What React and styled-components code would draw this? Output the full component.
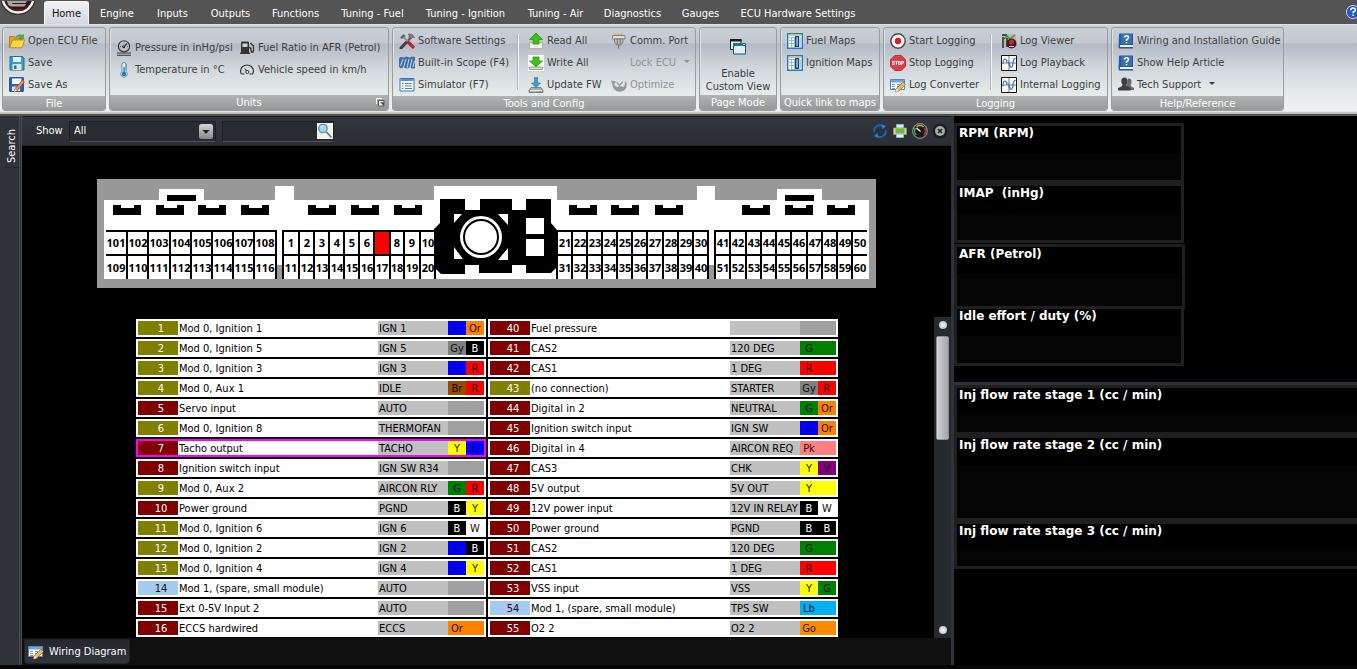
import React from 'react';
import styled, { createGlobalStyle, css } from 'styled-components';

const GlobalStyle = createGlobalStyle`
	* {
		box-sizing: border-box;
	}

	body {
		margin: 0;
		background: #000;
	}

	body, button, input, select {
		font-family: 'DejaVu Sans Condensed', 'Noto Sans', sans-serif;
		font-size: 11px;
		line-height: 14px;
	}

	button {
		margin: 0;
		padding: 0;
		border: 0;
		background: none;
		color: inherit;
	}
`;

const Page = styled.div`
	display: flex;
	flex-direction: column;
	height: 100vh;
	overflow: hidden;
	padding-bottom: 4px;
	background: #050505;
`;

/* ---------- tabs ---------- */

const TopBar = styled.header`
	display: flex;
	flex: none;
	align-items: flex-end;
	justify-content: space-between;
	height: 24px;
	overflow: hidden;
	background: #545454;
`;

const Orb = styled.button`
	align-self: flex-start;
	width: 44px;
	height: 16px;

	svg {
		display: block;
	}
`;

const Tabs = styled.nav`
	display: flex;
	flex: 1;
`;

const Tab = styled.button`
	flex: none;
	height: 23px;
	width: ${props => props.$width}px;
	padding: 2px 0 0;
	border-radius: 3px 3px 0 0;
	color: #fff;
	white-space: nowrap;

	${props => props.$active && css`
		border: 1px solid #f4f5f7;
		border-bottom: 0;
		background: linear-gradient(#f1f3f5, #d3d7dd);
		color: #111;
	`}
`;

const HelpButton = styled.button`
	align-self: center;
	width: 12px;
	height: 16px;
`;

/* ---------- ribbon ---------- */

const Ribbon = styled.div`
	display: flex;
	flex: none;
	gap: 3px;
	height: 92px;
	padding: 2px 2px 3px;
	border-top: 1px solid #dfe2e6;
	border-bottom: 2px solid #545454;
	background: linear-gradient(#cdd1d8, #c3c8d1 18px, #b4bac5 19px, #cfd4d9 40px, #e4eae9 66px, #f0f2f2 86px, #bcbcbc 88px);
`;

const GroupBox = styled.section`
	display: flex;
	flex-direction: column;
	flex: none;
	width: ${props => props.$width}px;
	border: 1px solid #9a9da0;
	border-radius: 3px;
	box-shadow: inset 1px 0 #dde0e4;
	overflow: hidden;
`;

const GroupBody = styled.div`
	display: flex;
	flex: 1;
	padding: ${props => (props.$low ? 9 : 2)}px 0 0 6px;
`;

const GroupTitle = styled.h2`
	display: flex;
	align-items: center;
	justify-content: center;
	position: relative;
	height: 15px;
	margin: 0;
	padding-top: 1px;
	background: linear-gradient(#b0b3b3, #969898);
	color: #fff;
	font-weight: normal;
	font-size: 11px;
`;

const Launcher = styled.button`
	position: absolute;
	right: 3px;
	top: 3px;
	height: 9px;

	svg {
		display: block;
	}
`;

const Column = styled.div`
	flex: none;
	width: ${props => props.$width}px;
`;

const Divider = styled.span`
	width: 1px;
	height: 56px;
	margin: 4px 9px 0 0;
	background: #f4f4f6;
	box-shadow: -1px 0 #b2b6bc;
`;

const Tool = styled.button`
	display: flex;
	align-items: center;
	gap: 3px;
	height: 22px;
	color: ${props => (props.disabled ? '#8f9296' : '#3b3d41')};
	white-space: nowrap;
`;

const IconSlot = styled.span`
	display: flex;
	flex: none;
	width: 16px;
	height: 16px;
`;

const BigTool = styled.button`
	display: flex;
	flex-direction: column;
	align-items: center;
	justify-content: flex-end;
	gap: 12px;
	width: 100%;
	padding: 0 6px 2px 0;
	line-height: 13px;
	color: #3b3d41;
	white-space: nowrap;
`;

/* ---------- workspace ---------- */

const Workspace = styled.div`
	display: flex;
	flex: 1;
	min-height: 0;
`;

const SideRail = styled.aside`
	flex: none;
	width: 22px;
	border-right: 3px double #4a4c50;
	background: #2f3238;
`;

const RailTab = styled.button`
	display: flex;
	align-items: center;
	justify-content: center;
	width: 14px;
	height: 52px;
	margin-left: 5px;
	padding-bottom: 10px;
	border-top: 1px solid #24262a;
	color: #fff;
	writing-mode: vertical-rl;
	transform: rotate(180deg);
`;

const MainPane = styled.main`
	display: flex;
	flex: 1;
	flex-direction: column;
	min-width: 0;
	background: #000;
`;

const Toolbar = styled.div`
	display: flex;
	flex: none;
	align-items: center;
	height: 30px;
	padding: 0 3px 0 14px;
	border-top: 1px solid #1b1d21;
	border-bottom: 1px solid #1f2125;
	background: linear-gradient(#32353c, #2b2e35);
	color: #fff;
`;

const ShowLabel = styled.label`
	width: 33px;
`;

const fieldBox = css`
	display: flex;
	align-items: center;
	height: 21px;
	border: 1px solid #1c1e22;
	border-bottom-color: #4e5157;
	background: #282b31;
`;

const SelectBox = styled.div`
	${fieldBox}
	position: relative;
	width: 147px;

	select {
		width: 100%;
		height: 18px;
		padding: 0 0 0 4px;
		border: 0;
		background: transparent;
		color: #fff;
		appearance: none;
	}

	svg {
		position: absolute;
		right: 1px;
		top: 1px;
		pointer-events: none;
	}
`;

const SearchBox = styled.form`
	${fieldBox}
	width: 112px;
	margin-left: 6px;

	input {
		flex: 1;
		min-width: 0;
		padding: 0 4px;
		border: 0;
		outline: 0;
		background: transparent;
		color: #fff;
	}

	button {
		width: 16px;
		height: 16px;
	}

	svg {
		display: block;
	}
`;

const ToolbarActions = styled.div`
	display: flex;
	gap: 4px;
	margin-left: auto;

	button {
		width: 16px;
		height: 16px;
	}

	svg {
		display: block;
	}
`;

const ConnectorArea = styled.div`
	display: flex;
	flex: none;
	justify-content: center;
	height: 171px;
	padding-top: 33px;

	svg {
		flex: none;
	}

	text {
		font-family: 'Noto Sans', sans-serif;
		font-size: 11px;
		font-weight: bold;
		text-anchor: middle;
	}
`;

const ListArea = styled.div`
	display: flex;
	flex: 1;
	min-height: 0;
	padding-left: 18px;
	overflow: hidden;
`;

const PinTables = styled.div`
	display: flex;
	flex: 1;
	gap: 2px;
	align-items: flex-start;
	justify-content: center;
	height: 321px;
`;

const PinTable = styled.table`
	flex: none;
	width: 350px;
	table-layout: fixed;
	border-collapse: separate;
	border-spacing: 0 2px;
`;

const PinRow = styled.tr`
	background: #fff;

	th, td {
		height: 18px;
		padding: 2px 0 0;
		border: 0 solid ${props => (props.$selected ? '#f0f' : '#fff')};
		border-width: 2px 0;
		font-weight: normal;
		line-height: 12px;
		white-space: nowrap;
	}

	th {
		border-left-width: 2px;
	}

	td:last-child {
		border-right-width: 2px;
	}
`;

const kinds = {
	mod: '#808000',
	ecu: '#800000',
	spare: '#a6caf0',
};

const PinNumber = styled.th`
	width: 42px;
	background: ${props => kinds[props.$kind]};
	color: ${props => (props.$kind === 'spare' ? '#111' : '#fff')};
	text-indent: 6px;
`;

const PinName = styled.td`
	width: 200px;
	text-indent: 1px;
`;

const PinLabel = styled.td`
	width: 70px;
	background: #c0c0c0;
	text-indent: 1px;
`;

const Swatch = styled.td`
	width: ${props => (props.$last ? 20 : 18)}px;
	background: ${props => props.$fill};
	color: ${props => props.$ink};
	text-align: center;
`;

const ScrollBar = styled.div`
	display: flex;
	flex: none;
	flex-direction: column;
	align-items: center;
	width: 17px;
	padding: 4px 0;
	background: #26292e;
`;

const ScrollDot = styled.button`
	flex: none;
	width: 8px;
	height: 8px;
	border-radius: 50%;
	background: radial-gradient(#fff, #a5a7aa);
`;

const ScrollTrack = styled.div`
	flex: 1;
	width: 13px;
	padding-top: 7px;
`;

const ScrollThumb = styled.div`
	height: 104px;
	border: 1px solid #8e9094;
	border-radius: 2px;
	background: linear-gradient(90deg, #cfd1d5, #a4a6aa);
`;

const PageTabs = styled.footer`
	flex: none;
	height: 27px;
	padding: 1px 2px;
	background: #101010;
`;

const PageTab = styled.button`
	display: flex;
	align-items: center;
	gap: 5px;
	height: 25px;
	width: 106px;
	padding-left: 3px;
	border: 1px solid #202226;
	border-radius: 0 0 4px 4px;
	background: linear-gradient(#24272c, #32353b);
	color: #fff;
	white-space: nowrap;
`;

const Splitter = styled.div`
	flex: none;
	width: 3px;
	background: #2f3238;
`;

const Readouts = styled.section`
	flex: none;
	width: 30%;
	max-width: 403px;
	background: #000;
`;

const ReadoutStack = styled.div`
	height: ${props => (props.$top ? '269px' : 'auto')};
	padding-top: ${props => (props.$top ? 7 : 0)}px;
	border-bottom: ${props => (props.$top ? '3px solid #2f3238' : 0)};
`;

const Gauge = styled.div`
	width: ${props => props.$width};
	height: ${props => props.$height}px;
	margin-top: ${props => props.$gap || 0}px;
	padding: 0 2px;
	border: 3px solid #1f1f1f;
	border-right-width: ${props => (props.$width === '100%' ? 0 : 3)}px;
	background: linear-gradient(#000 27px, #040404 27px);
	color: #fff;
	font-family: 'DejaVu Sans', sans-serif;
	font-size: 12px;
	font-weight: bold;
	line-height: 14px;
	white-space: pre;
`;

/* ---------- icons ---------- */

const notepad = (
	<>
		<path d="M.5 2.5h14v10H.5z" fill="#f7fbff" stroke="#5a86bb" />
		<path d="M1 3h13v2.500H1z" fill="#6fa4dd" />
		<path d="M2 7h3v1H2zM2 9h3v1H2zM2 11h3v1H2zM7 7h4v1H7zM7 9h2v1H7z" fill="#7f9fc6" />
		<path d="M5.500 15l1-3.500 6.500-6.500 2.500 2.500L9 14z" fill="#f2b850" stroke="#9c6a22" strokeWidth=".7" />
		<path d="M5.500 15l1-3.500L9 14z" fill="#f9e3c0" />
	</>
);

const wave = (
	<>
		<path d="M.5.5h15v15H.5z" fill="#fff" stroke="#111" />
		<path d="M8 1v14M1 8h14" stroke="#444" strokeWidth=".7" />
		<path d="M2 9.500c0-7 3.500-7 4-1.500" fill="none" stroke="#2e79bd" strokeWidth="1.100" />
		<path d="M8 8c.5 6 3.500 5.500 4 0q.3-4 2.500-5" fill="none" stroke="#2e79bd" strokeWidth="1.300" />
		<path d="M6.500 5l3 6" fill="none" stroke="#5b5b8c" strokeWidth=".7" />
	</>
);

const helpBook = (
	<>
		<path d="M1 1.500Q1 .5 2 .5h13v15H2Q.5 15.500.5 14z" fill="#2457a0" />
		<path d="M2 12h13v2H2z" fill="#eef3fa" />
		<path d="M3 1h11v10H3z" fill="#366fb8" />
		<path d="M6.500 4.500Q6.500 2.800 8.500 2.800T10.500 4.500Q10.500 5.700 8.500 6.500V8M8.500 9v1.300" fill="none" stroke="#fff" strokeWidth="1.600" />
	</>
);

const mapSheet = (
	<>
		<path d="M.7.7h14.600v14.600H.7z" fill="#fff" stroke="#1a7fc0" strokeWidth="1.400" />
		<path d="M2 1.500h12v1.500H2z" fill="#f0c36a" />
		<path d="M2 4.500h5M2 7.500h5M2 10.500h5M4.500 4v10M7.500 4v10" stroke="#84b7dc" strokeWidth=".9" />
		<path d="M8.600 3.600h3v9.800h-3z" fill="#7db6df" stroke="#20436e" strokeWidth="1.200" />
		<path d="M13.200 4.500v9" stroke="#9cb6cb" />
	</>
);

const icons = {
	open: (
		<>
			<path d="M.5 14.500V3.500h5l1 1.500h6v9.500z" fill="#e2a325" stroke="#a6741a" strokeWidth=".8" />
			<path d="M.7 14.800L3.500 7h12.300l-3 7.800z" fill="#ffd54a" stroke="#b5821d" strokeWidth=".8" />
			<path d="M7 4.500C8 1.500 11 1 13 2.500l1.300-1.300.5 4.600h-4.500l1.200-1.500C10 3 8.500 3 7 4.500z" fill="#4cb24a" stroke="#2c8433" strokeWidth=".5" />
		</>
	),
	save: (
		<>
			<path d="M1 1.500h12.500L15 3v12H1z" fill="#3d9cc4" stroke="#27738f" />
			<path d="M4 2h8v5H4z" fill="#e8f5fb" />
			<path d="M3.500 9h9v6h-9z" fill="#d2e6ef" />
			<path d="M5 10.500h2.500V14H5z" fill="#2c7594" />
		</>
	),
	saveAs: (
		<>
			<path d="M.7.7h13.600v13.600H.7z" fill="#2d62c4" stroke="#1c3f8a" />
			<path d="M3 1.500h9.500V7H3z" fill="#fff" />
			<path d="M3 9.500h8V14H3z" fill="#dbe6f5" />
			<path d="M5 15l1-3.500L13.500 3l2 1.800L8.500 13.500z" fill="#e88d3c" stroke="#7a4a1e" strokeWidth=".6" />
			<path d="M5 15l1-3 2 1.500z" fill="#fbe6c8" />
		</>
	),
	pressure: (
		<g fill="none" stroke="#333" strokeWidth="1.100">
			<circle cx="8" cy="6.300" r="5.600" />
			<path d="M8.500 6l2.500-2.500M1 13h14M1 15.200h14" />
			<circle cx="7.700" cy="6.800" r="1" />
			<path d="M8 2v1M4 6.500h1M11 6.500h1" strokeWidth=".7" />
		</g>
	),
	thermometer: (
		<>
			<path d="M6 2.500a2 2 0 014 0V9.500a3.200 3.200 0 11-4 0z" fill="#e3f2fa" stroke="#4d83a8" strokeWidth=".9" />
			<path d="M7.400 5h1.400v6H7.400z" fill="#2b86c9" />
			<circle cx="8" cy="12" r="2.200" fill="#1d79c0" />
			<path d="M9 3h2M9 5h2M9 7h2" stroke="#5b7f96" strokeWidth=".7" />
		</>
	),
	pump: (
		<>
			<path d="M2 2.500Q2 1.500 3 1.500h6q1 0 1 1V13H2zM1 12.500h10V14H1z" fill="#333" />
			<path d="M3.500 3.500h5V7h-5z" fill="#cdd2d8" />
			<path d="M10 7.500q2 0 2 2.500c0 3 2.500 3 2.500 0V6L11.500 3" fill="none" stroke="#333" strokeWidth="1.300" />
		</>
	),
	speed: (
		<>
			<path d="M2.500 12A6.500 6.500 0 0 1 1.500 9a6.500 6 0 0 1 13 0Q14.500 10.500 13.500 12h-3M2.500 12h3" fill="none" stroke="#333" strokeWidth="1.200" />
			<path d="M5 6L9.300 9 8 11z" fill="#333" />
			<circle cx="8.300" cy="10" r="1.500" fill="#dfe3e6" stroke="#333" />
		</>
	),
	tools: (
		<>
			<path d="M2 15L13.500 3" stroke="#555" strokeWidth="2" />
			<path d="M2 15l5-5.300" stroke="#3d4046" strokeWidth="3" strokeLinecap="round" />
			<path d="M4 3.500l5 5" stroke="#8d9095" strokeWidth="1.800" />
			<path d="M9.500 9.500l4.500 4.500" stroke="#b5262b" strokeWidth="3.200" strokeLinecap="round" />
			<path d="M1 4.500L4.500 1l2 2L3 6z" fill="#62656b" />
			<path d="M9 1.500Q13-.5 15.500 4.500l-2-.5-2 2L9.500 4 11 3z" fill="#7c7f85" stroke="#4c4e52" strokeWidth=".6" />
		</>
	),
	scope: (
		<>
			<path d="M0 4q1-3 3-2t3 0 3 0 3 0 4 0v11q-2 1-4 0t-3 0-3 0-3 0-3-1z" fill="#3f6ea8" />
			<path d="M1.500 11L4 4M4.500 13l2.500-9M8 13l2-9M11 13l2-9M14 12l1.500-6" fill="none" stroke="#c5d6e8" strokeWidth="1" />
		</>
	),
	simulator: (
		<>
			<path d="M1 1.500h14v12.500H1z" fill="#fff" stroke="#3f74b8" />
			<path d="M1.500 2h13v2h-13z" fill="#5b93d3" />
			<path d="M3 6h1.500v1H3zM3 8.500h1.500v1H3zM3 11h1.500v1H3zM6 6h7v1H6zM6 8.500h7v1H6zM6 11h7v1H6z" fill="#5380b8" />
		</>
	),
	read: (
		<>
			<path d="M1.500 9.500h13v6h-13z" fill="#f2f2f2" stroke="#b3b3a8" />
			<path d="M8 0l6.500 6.500h-3.500V11H5V6.500H1.500z" fill="#3cc313" stroke="#278a0a" strokeWidth=".7" />
		</>
	),
	write: (
		<>
			<path d="M0 0h16v16H0z" fill="#fff" />
			<path d="M1.500 12h13v2.500h-13z" fill="#d8d8cf" stroke="#8f8f86" strokeWidth=".8" />
			<path d="M8 12L1.500 6H5V2h6v4h3.500z" fill="#3cc313" stroke="#278a0a" strokeWidth=".7" />
		</>
	),
	update: (
		<>
			<path d="M3 10.500h10l2 3v2H1v-2z" fill="#a8adaf" stroke="#6c7072" strokeWidth=".8" />
			<path d="M2 13.500h12" stroke="#e9ecec" />
			<path d="M10.500 14h2v1h-2z" fill="#4dbb3f" />
			<path d="M8 10.500L3.500 6H6q1-2 .5-5.500h3Q9 4 10 6h2.500z" fill="#3f9bd4" stroke="#256e9d" strokeWidth=".6" />
		</>
	),
	port: (
		<>
			<path d="M4.500.500v2.500M7.500.500v2.500M10.500.500v2.500" stroke="#e5a24a" strokeWidth="1.700" />
			<path d="M1.500 2.500h12.500V6h-12.500z" fill="#dcdddf" stroke="#808285" />
			<path d="M3.500 6h8.500v3l-2.500 3H6L3.500 9z" fill="#c2c4c7" stroke="#77797c" />
			<path d="M7.700 12v3.500M6.300 6v5.500M9.200 6v5.500" stroke="#66686b" />
		</>
	),
	none: null,
	optimize: (
		<>
			<path d="M3 5Q3 9 6 10l3-1 3 1Q15 8 13.500 4l2 1.500Q17 13 10 14.500q-7 1-8.500-6z" fill="#96999c" />
			<path d="M0 3.500l5 1L2 9zM6 4.500l2.500 3 3-3.500.5 1.500-3.500 4-3-3.500z" fill="#96999c" />
		</>
	),
	windows: (
		<>
			<path d="M.5.500h10.500v10H.5z" fill="#e9edf0" stroke="#1c1c1c" />
			<path d="M0 0h11.500v2.500H0z" fill="#1c1c1c" />
			<path d="M3.500 4.500h12v10.500h-12z" fill="#e7edef" stroke="#14576f" />
			<path d="M3 4h13v3H3z" fill="#0e7897" />
			<path d="M13 5h2v1h-2z" fill="#fff" />
		</>
	),
	map: mapSheet,
	record: (
		<>
			<circle cx="8" cy="8" r="7.200" fill="#fdfdfd" stroke="#4a4a4a" strokeWidth="1.500" />
			<circle cx="8" cy="8" r="3.200" fill="#e01b24" />
		</>
	),
	stop: (
		<>
			<path d="M4.800.5h6.400l4.300 4.300v6.400l-4.300 4.300H4.800L.5 11.200V4.800z" fill="#d8404b" stroke="#b5303a" />
			<path d="M4.500 6.500H2.500V8h2v1.500h-2M5.300 6.500h2.400M6.500 6.500v3M8.600 6.500h1.600v3H8.600zM11.600 10V6.500h1.900V8h-1.900" fill="none" stroke="#fff" strokeWidth=".9" />
		</>
	),
	notepad,
	logView: (
		<>
			<path d="M1 1h14v13H1z" fill="#b9b9ad" />
			<path d="M1 1h5v2H1zM1 4h2v11H1zM5 5h2v9H5z" fill="#4c4f4c" />
			<path d="M3 6l3-3 3 3 5-4" fill="none" stroke="#3b8f3b" strokeWidth="1.300" />
			<circle cx="10.500" cy="10.500" r="5" fill="#3a2020" />
			<circle cx="10.500" cy="9" r="2.600" fill="#c02a2a" />
			<path d="M8 13.500h5" stroke="#e2e2e2" />
		</>
	),
	wave,
	help: helpBook,
	people: (
		<g fill="#3d3f42">
			<path d="M10 1.500q3.500-.5 3.500 3 0 2-1 3.500 0 1.500 3.500 3v2H11L8.500 9z" opacity=".75" />
			<path d="M6.500.500Q9.500.500 9.500 4q0 2.500-1.300 4 0 1.500 4.300 3v2.500H0V11q4.500-1.500 4.500-3Q3.300 6.500 3.300 4 3.300.500 6.500.500z" />
		</g>
	),
	find: (
		<>
			<path d="M0 0h16v16H0z" fill="#f4f2ef" />
			<circle cx="6" cy="5.500" r="4.200" fill="#a9d2f0" stroke="#5c8fbd" strokeWidth="1.300" />
			<path d="M4 4.500q1-2 3-1.500" fill="none" stroke="#fff" />
			<path d="M9.500 9l5 5.500" stroke="#6d6f73" strokeWidth="1.600" />
		</>
	),
	refresh: (
		<>
			<path d="M2.300 9A5.600 5.600 0 0 1 10.500 3M13.700 7.500A5.600 5.600 0 0 1 5.500 13.200" fill="none" stroke="#1468c4" strokeWidth="1.800" />
			<path d="M9.500 1l4.500 2.300-3.500 3zM6.500 15.200L2 12.900l3.500-3z" fill="#1c86e0" />
		</>
	),
	printer: (
		<>
			<path d="M4.500 1.500h7v4h-7z" fill="#d3e9f7" stroke="#8fb4cc" />
			<path d="M1.500 5h13v6.500h-13z" fill="#cfd6ca" stroke="#8a9a78" strokeWidth=".8" />
			<path d="M3.500 5.500h9v5h-9z" fill="#7cb82f" />
			<path d="M4.500 11h7v3.500h-7z" fill="#e6f3fb" stroke="#8fb4cc" />
		</>
	),
	gauge: (
		<>
			<circle cx="8" cy="8" r="7.300" fill="#16181a" stroke="#8a8c8f" strokeWidth="1.200" />
			<path d="M4.200 12A5.500 5.500 0 0 1 3.500 4.800" fill="none" stroke="#31b14a" strokeWidth="1.600" />
			<path d="M4.500 3.800a5.500 5.500 0 0 1 7 0" fill="none" stroke="#b8a62a" strokeWidth="1.600" />
			<path d="M12.300 4.800a5.500 5.500 0 0 1-.5 7.200" fill="none" stroke="#c4332b" strokeWidth="1.600" />
			<path d="M8.500 8.500l-4-3.500" stroke="#f5f5f5" strokeWidth="1.300" />
		</>
	),
	close: (
		<>
			<circle cx="8" cy="8" r="7.500" fill="#1c1d20" />
			<circle cx="8" cy="8" r="5" fill="#aaabad" />
			<path d="M6 6l4 4M10 6l-4 4" stroke="#222" strokeWidth="1.700" />
		</>
	),
	about: (
		<>
			<circle cx="8" cy="8" r="6.600" fill="#2458c8" stroke="#c8d4ec" />
			<path d="M5.800 6.300q0-2.300 2.300-2.300t2.200 2q0 1.300-2.200 2.300v1M8.100 10.500v1.600" fill="none" stroke="#fff" strokeWidth="1.600" />
		</>
	),
	arrow: (
		<>
			<defs>
				<linearGradient id="arrowFace" x2="0" y2="1">
					<stop stopColor="#d4d5d7" />
					<stop offset="1" stopColor="#85878a" />
				</linearGradient>
			</defs>
			<rect x="1" y="1" width="14" height="15" rx="2.500" fill="url(#arrowFace)" />
			<path d="M4.500 7h7L8 11z" fill="#222" />
		</>
	),
};

const Icon = ({ name }) => (
	<svg width="16" height="16" viewBox="0 0 16 16" aria-hidden="true">
		{icons[name]}
	</svg>
);

const OrbLogo = () => (
	<svg width="38" height="15" viewBox="0 0 38 15" aria-hidden="true">
		<circle cx="18" cy="-4" r="18" fill="#3a3132" />
		<circle cx="18" cy="-4" r="15.500" fill="#32181a" stroke="#f0f0f0" strokeWidth="2.500" />
		<path d="M7 0h20l-1.500 2H13q-1 0-1 1h14l-1.500 2.500H11Q8 5 7 0z" fill="#a9a4a4" />
		<path d="M8 6.500q10 3 20 0-8 7-20 0z" fill="#6e1a1d" />
	</svg>
);

/* ---------- ribbon content ---------- */

const tabs = [
	['Home', 45],
	['Engine', 56],
	['Inputs', 55],
	['Outputs', 61],
	['Functions', 69],
	['Tuning - Fuel', 85],
	['Tuning - Ignition', 101],
	['Tuning - Air', 79],
	['Diagnostics', 75],
	['Gauges', 61],
	['ECU Hardware Settings', 134],
];

const ToolButton = ({ icon, children, arrow, disabled }) => (
	<Tool type="button" disabled={disabled}>
		<IconSlot><Icon name={icon} /></IconSlot>
		{children}
		{arrow && (
			<svg width="12" height="8" viewBox="0 0 12 8" aria-hidden="true">
				<path d="M5 1h6L8 4z" fill="currentColor" />
			</svg>
		)}
	</Tool>
);

const Group = ({ title, width, low, launcher, children }) => (
	<GroupBox $width={width}>
		<GroupBody $low={low}>{children}</GroupBody>
		<GroupTitle>
			{title}
			{launcher && (
				<Launcher type="button" aria-label="More units">
					<svg width="9" height="9" viewBox="0 0 9 9">
						<path d="M.5 6V.5H6" fill="none" stroke="#fff" />
						<path d="M2.500 2.500h5.500V8H2.500z" fill="#eee" stroke="#555" />
						<path d="M4 4l4 4V4.500" fill="#444" />
					</svg>
				</Launcher>
			)}
		</GroupTitle>
	</GroupBox>
);

const RibbonBar = () => (
	<Ribbon>
		<Group title="File" width={104}>
			<Column $width={90}>
				<ToolButton icon="open">Open ECU File</ToolButton>
				<ToolButton icon="save">Save</ToolButton>
				<ToolButton icon="saveAs">Save As</ToolButton>
			</Column>
		</Group>
		<Group title="Units" width={280} low launcher>
			<Column $width={123}>
				<ToolButton icon="pressure">Pressure in inHg/psi</ToolButton>
				<ToolButton icon="thermometer">Temperature in °C</ToolButton>
			</Column>
			<Column $width={140}>
				<ToolButton icon="pump">Fuel Ratio in AFR (Petrol)</ToolButton>
				<ToolButton icon="speed">Vehicle speed in km/h</ToolButton>
			</Column>
		</Group>
		<Group title="Tools and Config" width={304}>
			<Column $width={119}>
				<ToolButton icon="tools">Software Settings</ToolButton>
				<ToolButton icon="scope">Built-in Scope (F4)</ToolButton>
				<ToolButton icon="simulator">Simulator (F7)</ToolButton>
			</Column>
			<Divider />
			<Column $width={83}>
				<ToolButton icon="read">Read All</ToolButton>
				<ToolButton icon="write">Write All</ToolButton>
				<ToolButton icon="update">Update FW</ToolButton>
			</Column>
			<Column $width={83}>
				<ToolButton icon="port">Comm. Port</ToolButton>
				<ToolButton icon="none" arrow disabled>Lock ECU</ToolButton>
				<ToolButton icon="optimize" disabled>Optimize</ToolButton>
			</Column>
		</Group>
		<Group title="Page Mode" width={78}>
			<BigTool type="button">
				<Icon name="windows" />
				<span>Enable<br />Custom View</span>
			</BigTool>
		</Group>
		<Group title="Quick link to maps" width={100}>
			<Column $width={90}>
				<ToolButton icon="map">Fuel Maps</ToolButton>
				<ToolButton icon="map">Ignition Maps</ToolButton>
			</Column>
		</Group>
		<Group title="Logging" width={225}>
			<Column $width={101}>
				<ToolButton icon="record">Start Logging</ToolButton>
				<ToolButton icon="stop">Stop Logging</ToolButton>
				<ToolButton icon="notepad">Log Converter</ToolButton>
			</Column>
			<Divider />
			<Column $width={100}>
				<ToolButton icon="logView">Log Viewer</ToolButton>
				<ToolButton icon="wave">Log Playback</ToolButton>
				<ToolButton icon="wave">Internal Logging</ToolButton>
			</Column>
		</Group>
		<Group title="Help/Reference" width={173}>
			<Column $width={160}>
				<ToolButton icon="help">Wiring and Installation Guide</ToolButton>
				<ToolButton icon="help">Show Help Article</ToolButton>
				<ToolButton icon="people" arrow>Tech Support</ToolButton>
			</Column>
		</Group>
	</Ribbon>
);

/* ---------- connector drawing ---------- */

const banks = [
	{ top: 101, count: 8, start: 9, end: 180, lines: [29, 50, 72, 93, 114, 135, 156, 178] },
	{ top: 1, count: 10, start: 187, end: 339, lines: [185, 201, 216, 231, 246, 261, 276, 292, 306, 322, 337] },
	{ top: 21, count: 10, start: 461, end: 612, lines: [459, 474, 489, 504, 519, 534, 549, 565, 580, 595, 610] },
	{ top: 41, count: 10, start: 619, end: 770, lines: [617, 632, 648, 663, 678, 693, 709, 724, 739, 754] },
];

const notches = [16, 59, 101, 144, 211, 254, 297, 472, 514, 558, 645, 688, 730];

const Bank = ({ bank }) => {
	const walls = bank.lines.filter(x => x >= bank.start);
	const left = Math.min(bank.start, bank.lines[0]);
	const cells = Array.from({ length: bank.count }, (_, i) => {
		const from = i === 0 ? bank.start : walls[i - 1] + 2;
		const to = walls[i] === undefined ? bank.end : walls[i];
		return { pin: bank.top + i, mid: Math.round((from + to) / 2) };
	});

	return (
		<g>
			<rect x={left} y="51" width={bank.end - left} height="2" />
			<rect x={left} y="75" width={bank.end - left} height="2" />
			{bank.lines.map(x => <rect key={x} x={x} y="51" width="2" height="49" />)}
			{cells.map(cell => (
				<g key={cell.pin}>
					{cell.pin === 7
						? <rect x="278" y="53" width="14" height="22" fill="#f00" />
						: <text x={cell.mid} y="68">{cell.pin}</text>}
					<text x={cell.mid} y="93">{cell.pin + bank.count}</text>
				</g>
			))}
		</g>
	);
};

const Connector = () => (
	<svg width="779" height="109" viewBox="0 0 779 109" role="img" aria-label="ECU connector pins">
		<rect width="779" height="109" fill="#999" />
		<path d="M7 21h55V10h45v11h71V7h19v14h140V7h123v14h140V7h18v14h62V10h45v11h47v79H7z" fill="#fff" />
		<path d="M180 86h5v14h-5zM612 86h5v14h-5z" fill="#999" />
		<path d="M70 16h29v6H70zM688 16h29v6h-29z" />
		{notches.map(x => <path key={x} d={`M${x} 26h8v3h13v-3h7v10h-28z`} />)}
		{banks.map(bank => <Bank key={bank.top} bank={bank} />)}
		<path d="M343 20h25v11h15V20h32v11h14V20h25v24l6 7v37l-6 6h-25v-8h-14v8h-33v-8h-14v9h-24l-7-7V50l6-6z" />
		<g fill="#fff">
			<path d="M357 35h8l-8 9zM401 35h10v11zM357 68l9 12h-9zM411 69v12h-10z" />
			<circle cx="384" cy="58" r="21" />
			<path d="M429 39h18v16h-18zM429 60h18v17h-18z" />
		</g>
		<circle cx="384" cy="58" r="17" fill="none" stroke="#000" strokeWidth="2" />
	</svg>
);

/* ---------- pin list ---------- */

const colours = {
	L: ['#0000ff', '#000050'],
	Or: ['#ff8000', '#201000'],
	Gy: ['#808080', '#101010'],
	B: ['#000000', '#ffffff'],
	R: ['#ff0000', '#200000'],
	Br: ['#964b00', '#100800'],
	Y: ['#ffff00', '#202000'],
	G: ['#008000', '#001000'],
	W: ['#ffffff', '#101010'],
	Pk: ['#ff8080', '#201010'],
	V: ['#800080', '#180018'],
	Lb: ['#00b0f0', '#001820'],
	Go: ['#ff8c00', '#201000'],
};

const leftPins = [
	[1, 'mod', 'Mod 0, Ignition 1', 'IGN 1', 'L', 'Or'],
	[2, 'mod', 'Mod 0, Ignition 5', 'IGN 5', 'Gy', 'B'],
	[3, 'mod', 'Mod 0, Ignition 3', 'IGN 3', 'L', 'R'],
	[4, 'mod', 'Mod 0, Aux 1', 'IDLE', 'Br', 'R'],
	[5, 'ecu', 'Servo input', 'AUTO'],
	[6, 'mod', 'Mod 0, Ignition 8', 'THERMOFAN'],
	[7, 'ecu', 'Tacho output', 'TACHO', 'Y', 'L'],
	[8, 'ecu', 'Ignition switch input', 'IGN SW R34'],
	[9, 'mod', 'Mod 0, Aux 2', 'AIRCON RLY', 'G', 'R'],
	[10, 'ecu', 'Power ground', 'PGND', 'B', 'Y'],
	[11, 'mod', 'Mod 0, Ignition 6', 'IGN 6', 'B', 'W'],
	[12, 'mod', 'Mod 0, Ignition 2', 'IGN 2', 'L', 'B'],
	[13, 'mod', 'Mod 0, Ignition 4', 'IGN 4', 'L', 'Y'],
	[14, 'spare', 'Mod 1, (spare, small module)', 'AUTO'],
	[15, 'ecu', 'Ext 0-5V Input 2', 'AUTO'],
	[16, 'ecu', 'ECCS hardwired', 'ECCS', 'Or'],
];

const rightPins = [
	[40, 'ecu', 'Fuel pressure', ''],
	[41, 'ecu', 'CAS2', '120 DEG', 'G'],
	[42, 'ecu', 'CAS1', '1 DEG', 'R'],
	[43, 'mod', '(no connection)', 'STARTER', 'Gy', 'R'],
	[44, 'ecu', 'Digital in 2', 'NEUTRAL', 'G', 'Or'],
	[45, 'ecu', 'Ignition switch input', 'IGN SW', 'L', 'Or'],
	[46, 'ecu', 'Digital in 4', 'AIRCON REQ', 'Pk'],
	[47, 'ecu', 'CAS3', 'CHK', 'Y', 'V'],
	[48, 'ecu', '5V output', '5V OUT', 'Y'],
	[49, 'ecu', '12V power input', '12V IN RELAY', 'B', 'W'],
	[50, 'ecu', 'Power ground', 'PGND', 'B', 'B'],
	[51, 'ecu', 'CAS2', '120 DEG', 'G'],
	[52, 'ecu', 'CAS1', '1 DEG', 'R'],
	[53, 'ecu', 'VSS input', 'VSS', 'Y', 'G'],
	[54, 'spare', 'Mod 1, (spare, small module)', 'TPS SW', 'Lb'],
	[55, 'ecu', 'O2 2', 'O2 2', 'Go'],
];

const PinList = ({ pins, selected }) => (
	<PinTable>
		<tbody>
			{pins.map(([number, kind, name, label, first, second]) => {
				const [fill, ink] = colours[first] || ['#a0a0a0', '#000'];
				const [fill2, ink2] = colours[second] || [fill, ink];
				return (
					<PinRow key={number} $selected={number === selected}>
						<PinNumber scope="row" $kind={kind}>{number}</PinNumber>
						<PinName>{name}</PinName>
						<PinLabel>{label}</PinLabel>
						<Swatch $fill={fill} $ink={ink}>{first}</Swatch>
						<Swatch $fill={fill2} $ink={ink2} $last>{second}</Swatch>
					</PinRow>
				);
			})}
		</tbody>
	</PinTable>
);

const App = () => (
	<Page>
		<GlobalStyle />
		<TopBar>
			<Orb type="button" aria-label="Application menu"><OrbLogo /></Orb>
			<Tabs>
				{tabs.map(([name, width], i) => (
					<Tab key={name} type="button" $width={width} $active={i === 0}>{name}</Tab>
				))}
			</Tabs>
			<HelpButton type="button" aria-label="Help"><Icon name="about" /></HelpButton>
		</TopBar>
		<RibbonBar />
		<Workspace>
			<SideRail>
				<RailTab type="button">Search</RailTab>
			</SideRail>
			<MainPane>
				<Toolbar>
					<ShowLabel htmlFor="show">Show</ShowLabel>
					<SelectBox>
						<select id="show">
							<option>All</option>
						</select>
						<Icon name="arrow" />
					</SelectBox>
					<SearchBox>
						<input type="text" aria-label="Find pin" />
						<button type="button" aria-label="Find"><Icon name="find" /></button>
					</SearchBox>
					<ToolbarActions>
						<button type="button" aria-label="Refresh"><Icon name="refresh" /></button>
						<button type="button" aria-label="Print"><Icon name="printer" /></button>
						<button type="button" aria-label="Gauges"><Icon name="gauge" /></button>
						<button type="button" aria-label="Close"><Icon name="close" /></button>
					</ToolbarActions>
				</Toolbar>
				<ConnectorArea>
					<Connector />
				</ConnectorArea>
				<ListArea>
					<PinTables>
						<PinList pins={leftPins} selected={7} />
						<PinList pins={rightPins} />
					</PinTables>
					<ScrollBar>
						<ScrollDot type="button" aria-label="Scroll up" />
						<ScrollTrack><ScrollThumb /></ScrollTrack>
						<ScrollDot type="button" aria-label="Scroll down" />
					</ScrollBar>
				</ListArea>
				<PageTabs>
					<PageTab type="button">
						<Icon name="notepad" />
						Wiring Diagram
					</PageTab>
				</PageTabs>
			</MainPane>
			<Splitter />
			<Readouts>
				<ReadoutStack $top>
					<Gauge $width="230px" $height={60}>RPM (RPM)</Gauge>
					<Gauge $width="230px" $height={60}>IMAP  (inHg)</Gauge>
					<Gauge $width="231px" $height={65} $gap={1}>AFR (Petrol)</Gauge>
					<Gauge $width="230px" $height={60} $gap={-3}>Idle effort / duty (%)</Gauge>
				</ReadoutStack>
				<ReadoutStack>
					<Gauge $width="100%" $height={50}>Inj flow rate stage 1 (cc / min)</Gauge>
					<Gauge $width="100%" $height={86}>Inj flow rate stage 2 (cc / min)</Gauge>
					<Gauge $width="100%" $height={48}>Inj flow rate stage 3 (cc / min)</Gauge>
				</ReadoutStack>
			</Readouts>
		</Workspace>
	</Page>
);

export default App;
